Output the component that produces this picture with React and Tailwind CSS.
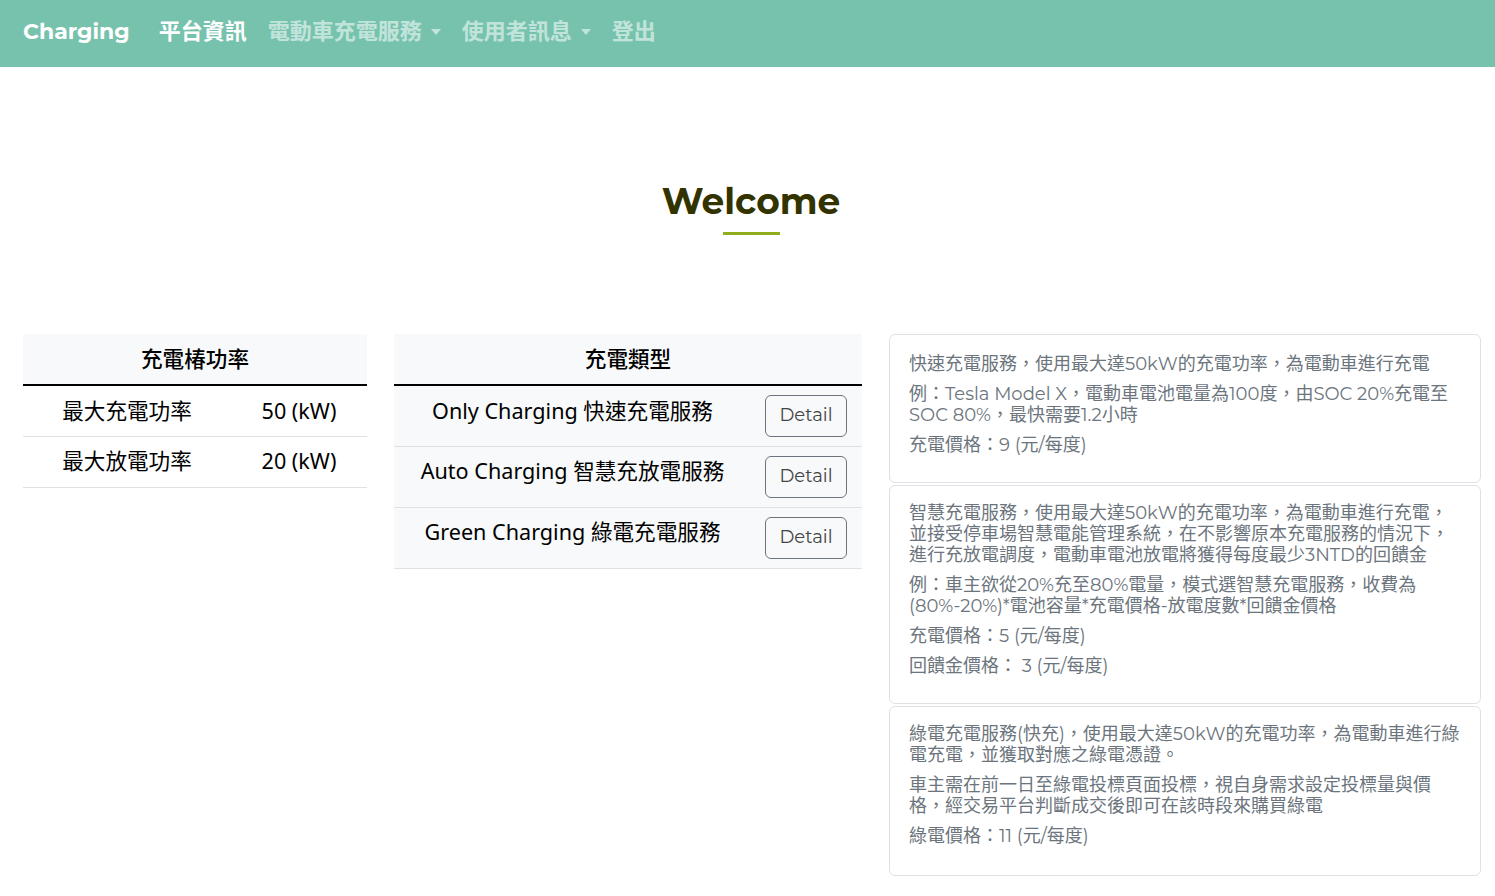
import React from 'react';

const mont = "font-['Montserrat','Noto_Sans','Noto_Sans_CJK_TC',sans-serif]";
const sys = "font-['Noto_Sans','Noto_Sans_CJK_TC',sans-serif]";

const Caret = () => (
  <span className="ml-[9px] inline-block h-0 w-0 border-x-[5px] border-t-[6px] border-x-transparent border-t-current align-middle" />
);

const Navbar = () => (
  <nav className={`flex h-[67px] items-center bg-[#76c2ad] px-[23px] pb-[4px] ${mont}`}>
    <span className="mr-[29px] text-[22px] font-bold text-white">Charging</span>
    <div className="flex items-center gap-[21px] text-[22px] font-bold">
      <span className="text-white">平台資訊</span>
      <span className="flex items-center text-white/55">電動車充電服務<Caret /></span>
      <span className="flex items-center text-white/55">使用者訊息<Caret /></span>
      <span className="text-white/55">登出</span>
    </div>
  </nav>
);

const PowerTable = () => (
  <table className={`w-[344px] text-center text-[21.6px] text-black ${sys}`}>
    <thead>
      <tr className="bg-[#f8f9fa]">
        <th colSpan={2} className="h-[51px] border-b-2 border-black font-medium">充電椿功率</th>
      </tr>
    </thead>
    <tbody>
      <tr className="border-b border-[#dee2e6]">
        <td className="h-[51px] w-[208px]">最大充電功率</td>
        <td>50 (kW)</td>
      </tr>
      <tr className="border-b border-[#dee2e6]">
        <td className="h-[51px]">最大放電功率</td>
        <td>20 (kW)</td>
      </tr>
    </tbody>
  </table>
);

const types = [
  'Only Charging 快速充電服務',
  'Auto Charging 智慧充放電服務',
  'Green Charging 綠電充電服務',
];

const TypeTable = () => (
  <table className={`w-[468px] bg-[#f8f9fa] text-center text-[21.6px] text-black ${sys}`}>
    <thead>
      <tr>
        <th colSpan={2} className="h-[51px] border-b-2 border-black font-medium">充電類型</th>
      </tr>
    </thead>
    <tbody>
      {types.map((t) => (
        <tr key={t} className="border-b border-[#dee2e6]">
          <td className="h-[61px] w-[358px] pb-[10px]">{t}</td>
          <td className="pl-[14px] pr-[15px] text-left">
            <button className={`h-[42px] w-[82px] rounded-[6px] border border-[#6c757d] text-[18px] text-[#444] ${mont}`}>Detail</button>
          </td>
        </tr>
      ))}
    </tbody>
  </table>
);

const Card = ({ paras, h, pt = 'pt-[17px]' }) => (
  <div className={`rounded-[6px] border border-[#dee2e6] px-[19px] ${pt} ${h} ${mont}`}>
    {paras.map((p, i) => (
      <p key={i} className="mb-[9px] text-[18px] leading-[21px] text-[#6c757d]">{p}</p>
    ))}
  </div>
);

export default function App() {
  return (
    <div className="min-h-screen bg-white">
      <Navbar />
      <div className="flex flex-col items-center pl-[7px] pt-[113px]">
        <h1 className={`text-[36px] font-bold leading-[42px] text-[#333300] ${mont}`}>Welcome</h1>
        <div className="mt-[10px] h-[3px] w-[57px] bg-[#8fae1b]" />
      </div>
      <div className="mt-[99px] flex items-start gap-[27px] pl-[23px]">
        <PowerTable />
        <TypeTable />
        <div className="flex w-[592px] flex-col gap-[2px]">
          <Card
            h="h-[149px]"
            pt="pt-[19px]"
            paras={[
              '快速充電服務，使用最大達50kW的充電功率，為電動車進行充電',
              '例：Tesla Model X，電動車電池電量為100度，由SOC 20%充電至SOC 80%，最快需要1.2小時',
              '充電價格：9 (元/每度)',
            ]}
          />
          <Card
            h="h-[219px]"
            paras={[
              '智慧充電服務，使用最大達50kW的充電功率，為電動車進行充電，並接受停車場智慧電能管理系統，在不影響原本充電服務的情況下，進行充放電調度，電動車電池放電將獲得每度最少3NTD的回饋金',
              '例：車主欲從20%充至80%電量，模式選智慧充電服務，收費為(80%-20%)*電池容量*充電價格-放電度數*回饋金價格',
              '充電價格：5 (元/每度)',
              '回饋金價格： 3 (元/每度)',
            ]}
          />
          <Card
            h="h-[170px]"
            paras={[
              '綠電充電服務(快充)，使用最大達50kW的充電功率，為電動車進行綠電充電，並獲取對應之綠電憑證。',
              '車主需在前一日至綠電投標頁面投標，視自身需求設定投標量與價格，經交易平台判斷成交後即可在該時段來購買綠電',
              '綠電價格：11 (元/每度)',
            ]}
          />
        </div>
      </div>
    </div>
  );
}
